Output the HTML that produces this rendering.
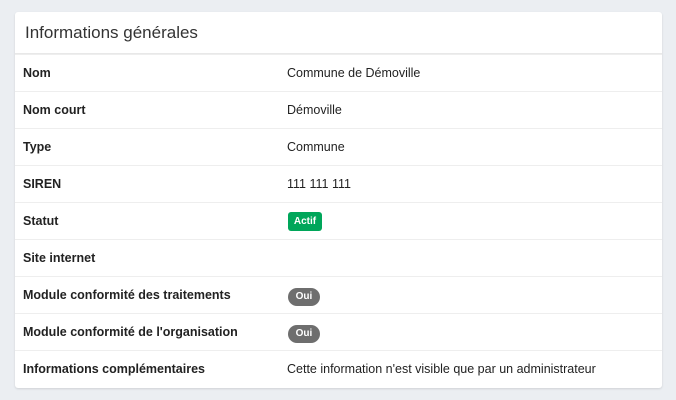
<!DOCTYPE html>
<html><head><meta charset="utf-8"><style>
body{margin:0;background:#ebeef2;font-family:"Liberation Sans",sans-serif;color:#222;width:676px;height:400px;overflow:hidden}
.card{position:absolute;left:15px;top:12px;width:647px;height:376px;background:#fff;border-radius:3px;box-shadow:0 1px 2px rgba(0,0,0,.12);overflow:hidden}
.hd{height:42px;box-sizing:border-box;border-bottom:1px solid #e8e8e8;font-size:17px;color:#333;padding-left:10px;line-height:41px}
.row{height:37px;box-sizing:border-box;border-top:1px solid #eee;position:relative;font-size:12.5px;line-height:36px}
.row:first-of-type{border-top:none}
.l{position:absolute;left:8px;font-weight:bold;color:#222}
.v{position:absolute;left:272px;top:0;color:#222;height:36px}
.b{position:absolute;left:1px;box-sizing:border-box;color:#fff;font-weight:bold;font-size:10px;line-height:12px;text-align:center;padding-top:4px}
.g{background:#00a65a;border-radius:3px;width:34px;height:19px;top:9px}
.o{background:#6e6e6e;border-radius:9px;width:32px;height:18px;top:11px;padding-top:3px}
</style></head><body>
<div class="card">
<div class="hd">Informations générales</div>
<div class="row"><span class="l">Nom</span><span class="v">Commune de Démoville</span></div>
<div class="row"><span class="l">Nom court</span><span class="v">Démoville</span></div>
<div class="row"><span class="l">Type</span><span class="v">Commune</span></div>
<div class="row"><span class="l">SIREN</span><span class="v">111 111 111</span></div>
<div class="row"><span class="l">Statut</span><span class="v"><span class="b g">Actif</span></span></div>
<div class="row"><span class="l">Site internet</span><span class="v"></span></div>
<div class="row"><span class="l">Module conformité des traitements</span><span class="v"><span class="b o">Oui</span></span></div>
<div class="row"><span class="l">Module conformité de l'organisation</span><span class="v"><span class="b o">Oui</span></span></div>
<div class="row"><span class="l">Informations complémentaires</span><span class="v">Cette information n'est visible que par un administrateur</span></div>
</div>
</body></html>
